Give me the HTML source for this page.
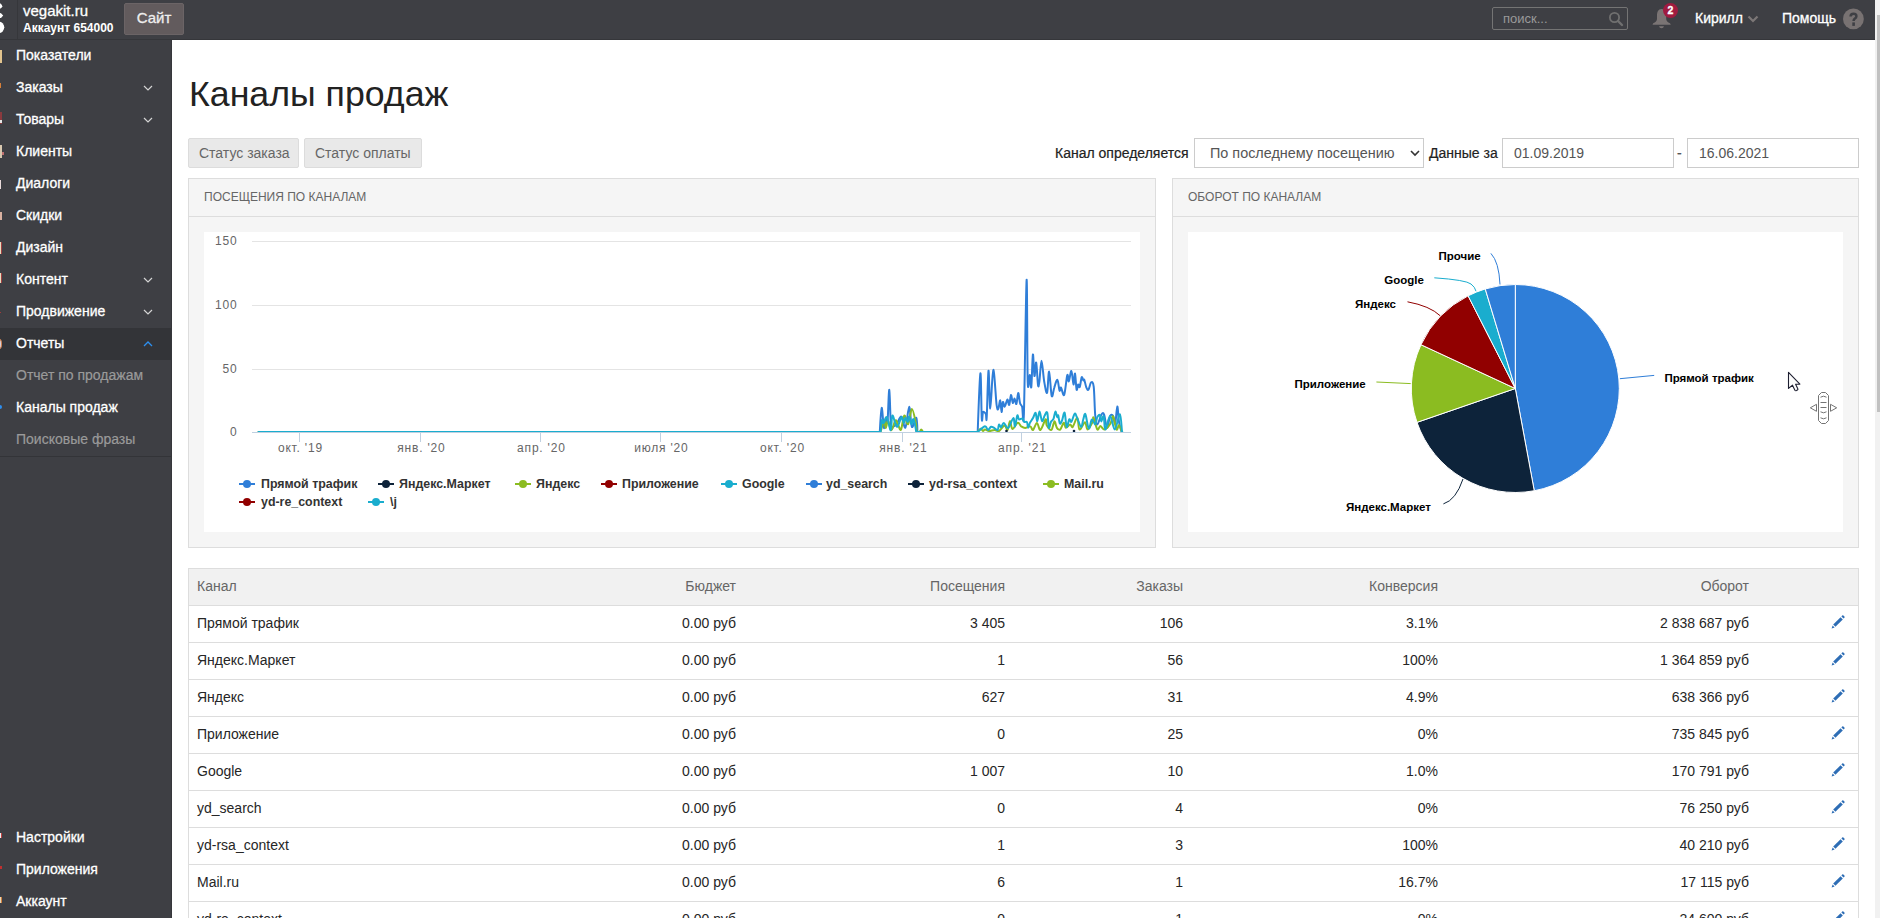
<!DOCTYPE html>
<html><head><meta charset="utf-8">
<style>
*{box-sizing:border-box;margin:0;padding:0}
html,body{width:1880px;height:918px;overflow:hidden;background:#fff;font-family:"Liberation Sans",sans-serif;color:#333}
.abs{position:absolute}
#top{position:absolute;left:0;top:0;width:1875px;height:40px;background:#3e3f44;border-bottom:1px solid #35363a}
#sb{position:absolute;left:0;top:40px;width:172px;height:878px;background:#3e3f44}
#scroll{position:absolute;left:1875px;top:0;width:5px;height:918px;background:#f1f1f1}
#thumb{position:absolute;left:1877px;top:15px;width:3px;height:397px;background:#c1c1c1}
.mi{position:absolute;left:0;width:172px;height:32px;line-height:30px;padding-left:16px;font-size:14px;color:#fff;white-space:nowrap;-webkit-text-stroke:0.3px #fff}
.mi.sub{color:#9a9a9a;-webkit-text-stroke:0.2px #9a9a9a}
.mi.act{background:#333438}
.chev{position:absolute;left:143px;top:12px;width:10px;height:8px}
.t{position:absolute;white-space:nowrap}
</style></head><body>
<div id="top">
  <div class="abs" style="left:17px;top:0;width:1px;height:39px;background:#36373b"></div>
  <div class="t" style="left:23px;top:1px;font-size:15px;color:#fff;line-height:20px;-webkit-text-stroke:0.3px #fff">vegakit.ru</div>
  <div class="t" style="left:23px;top:20px;font-size:12px;font-weight:bold;color:#fff;line-height:16px">Аккаунт 654000</div>
  <div class="abs" style="left:124px;top:3px;width:60px;height:32px;background:#625b5d;border:1px solid #6b6466;border-radius:2px;color:#eee;font-size:15px;line-height:28px;text-align:center;-webkit-text-stroke:0.3px #eee">Сайт</div>

  <div class="abs" style="left:1492px;top:7px;width:136px;height:23px;border:1px solid #747474;border-radius:2px"></div>
  <div class="t" style="left:1503px;top:8px;font-size:13px;line-height:21px;color:#9a9a9a">поиск...</div>
  <svg class="abs" style="left:1608px;top:11px" width="16" height="16" viewBox="0 0 16 16"><circle cx="6.5" cy="6.5" r="4.6" fill="none" stroke="#707070" stroke-width="1.8"/><path d="M10 10 L14 14" stroke="#707070" stroke-width="2.4" stroke-linecap="round"/></svg>
  <svg class="abs" style="left:1651px;top:8px" width="22" height="22" viewBox="0 0 22 22"><path d="M10.5 1 C7.2 1 6 4 6 8 L6 11 C6 13 4.5 14.3 2.2 15.3 L1.5 16.8 L19.8 16.8 L19 15.3 C16.7 14.3 15.2 13 15.2 11 L15.2 8 C15.2 4 14 1 10.5 1 Z" fill="#7a7474"/><path d="M8 18.2 L13 18.2 Q12.5 20.3 10.5 20.3 Q8.5 20.3 8 18.2 Z" fill="#7a7474"/></svg>
  <div class="abs" style="left:1663px;top:3px;width:15px;height:15px;border-radius:50%;background:#a01b40;color:#fff;font-size:10.5px;font-weight:bold;line-height:15px;text-align:center;-webkit-text-stroke:0.3px #fff">2</div>
  <div class="t" style="left:1695px;top:8px;font-size:14px;line-height:20px;color:#fff;-webkit-text-stroke:0.3px #fff">Кирилл</div>
  <svg class="abs" style="left:1747px;top:14px" width="12" height="10" viewBox="0 0 12 10"><path d="M1.5 2.5 L6 7 L10.5 2.5" fill="none" stroke="#7c7777" stroke-width="2.2"/></svg>
  <div class="t" style="left:1782px;top:8px;font-size:14px;line-height:20px;color:#fff;-webkit-text-stroke:0.3px #fff">Помощь</div>
  <svg class="abs" style="left:1843px;top:8px" width="22" height="22" viewBox="0 0 22 22"><circle cx="10.4" cy="10.9" r="10.4" fill="#787272"/><path d="M7.6 8.6 Q7.6 5.8 10.5 5.8 Q13.4 5.8 13.4 8.2 Q13.4 9.7 11.8 10.6 Q10.6 11.3 10.6 13" fill="none" stroke="#3e3f44" stroke-width="2.5"/><rect x="9.3" y="14.4" width="2.6" height="3.5" fill="#3e3f44"/></svg>
  <svg class="abs" style="left:0;top:0" width="17" height="39" viewBox="0 0 17 39"><path d="M0 3.5 L0.6 3.5 Q2.3 5 2.3 6.2 Q2.1 7.6 0.6 8.4 L0 8.4 Z" fill="#fff"/><path d="M0 13 L1 13.2 L3.2 15.6 L1 17.9 L0 18 Z" fill="#fff"/><circle cx="-1.5" cy="27.3" r="5.8" fill="#fff"/></svg>
</div>
<div id="sb">
  <div class="mi" style="top:0px">Показатели</div>
  <div class="mi" style="top:32px">Заказы<svg class="chev" viewBox="0 0 10 8"><path d="M1 2 L5 6 L9 2" fill="none" stroke="#d4d4d4" stroke-width="1.2"/></svg></div>
  <div class="mi" style="top:64px">Товары<svg class="chev" viewBox="0 0 10 8"><path d="M1 2 L5 6 L9 2" fill="none" stroke="#d4d4d4" stroke-width="1.2"/></svg></div>
  <div class="mi" style="top:96px">Клиенты</div>
  <div class="mi" style="top:128px">Диалоги</div>
  <div class="mi" style="top:160px">Скидки</div>
  <div class="mi" style="top:192px">Дизайн</div>
  <div class="mi" style="top:224px">Контент<svg class="chev" viewBox="0 0 10 8"><path d="M1 2 L5 6 L9 2" fill="none" stroke="#d4d4d4" stroke-width="1.2"/></svg></div>
  <div class="mi" style="top:256px">Продвижение<svg class="chev" viewBox="0 0 10 8"><path d="M1 2 L5 6 L9 2" fill="none" stroke="#d4d4d4" stroke-width="1.2"/></svg></div>
  <div class="mi act" style="top:288px">Отчеты<svg class="chev" viewBox="0 0 10 8"><path d="M1 6 L5 2 L9 6" fill="none" stroke="#2d8ff0" stroke-width="1.3"/></svg></div>
  <div class="mi sub" style="top:320px">Отчет по продажам</div>
  <div class="mi" style="top:352px">Каналы продаж</div>
  <div class="mi sub" style="top:384px">Поисковые фразы</div>
  <div class="abs" style="left:0;top:416px;width:172px;height:1px;background:#333438"></div>
  <div class="abs" style="left:171px;top:0;width:1px;height:878px;background:#36373b"></div>
  <div class="mi" style="top:782px">Настройки</div>
  <div class="mi" style="top:814px">Приложения</div>
  <div class="mi" style="top:846px">Аккаунт</div>

  <div class="abs" style="left:0;top:10px;width:2px;height:13px;background:#e2c48e"></div>
  <div class="abs" style="left:0;top:43px;width:1px;height:5px;background:#d6803a"></div>
  <div class="abs" style="left:0;top:72px;width:2px;height:12px;background:#8a3a3e"></div>
  <div class="abs" style="left:0;top:80px;width:2px;height:3px;background:#e6e6e6"></div>
  <div class="abs" style="left:0;top:105px;width:2px;height:13px;background:#d8c8b0"></div>
  <div class="abs" style="left:2px;top:112px;width:2px;height:3px;background:#c07070"></div>
  <div class="abs" style="left:0;top:140px;width:1px;height:9px;background:#e8dada"></div>
  <div class="abs" style="left:0;top:172px;width:2px;height:8px;background:#d8b0a0"></div>
  <div class="abs" style="left:0;top:202px;width:2px;height:12px;background:#e8dcc0;border-right:1px solid #a04040"></div>
  <div class="abs" style="left:0;top:233px;width:2px;height:10px;background:#e8dcc0;border-right:1px solid #a04040"></div>
  <div class="abs" style="left:0;top:272px;width:1px;height:1px;background:#a03a3a"></div>
  <div class="abs" style="left:-3px;top:299px;width:5px;height:10px;border-radius:50%;background:#dcd8e4;border:1px solid #d08050"></div>
  <div class="abs" style="left:-2px;top:365px;width:4px;height:4px;border-radius:50%;background:#2d8ff0"></div>
  <div class="abs" style="left:0;top:793px;width:2px;height:5px;background:#eee;border-right:1px solid #c04040"></div>
  <div class="abs" style="left:0;top:826px;width:2px;height:3px;background:#c03030"></div>
  <div class="abs" style="left:0;top:857px;width:2px;height:6px;background:#e8d8b8;border-right:1px solid #d08040"></div>
</div>
<div id="scroll"></div><div id="thumb"></div>
<style>
.btn{position:absolute;top:138px;height:30px;line-height:28px;background:#e9e9e9;border:1px solid #dcdcdc;border-radius:2px;color:#666;font-size:14px;padding:0 10px;white-space:nowrap}
.lbl{position:absolute;top:138px;line-height:30px;font-size:14px;color:#222;white-space:nowrap;-webkit-text-stroke:0.2px #222}
.inp{position:absolute;top:138px;height:30px;line-height:28px;border:1px solid #ccc;background:#fff;font-size:14px;color:#555;padding-left:11px;white-space:nowrap}
.panel{position:absolute;top:178px;height:370px;background:#f5f5f5;border:1px solid #ddd}
.ph{position:absolute;left:0;top:0;right:0;height:38px;border-bottom:1px solid #ddd;font-size:12px;color:#666;line-height:37px;padding-left:15px}
.pw{position:absolute;left:15px;top:53px;height:300px;background:#fff}
.tbl{position:absolute;left:188px;top:568px;width:1671px;height:360px;border:1px solid #ddd;border-bottom:none}
.tr{position:absolute;left:0;width:1669px;height:37px;border-bottom:1px solid #ddd;font-size:14px;line-height:34px;color:#262626}
.th{background:#f1f1f1;color:#666}
.c{position:absolute;top:0;white-space:nowrap}
.r{text-align:right}
.pen{position:absolute;left:1642px;top:9px;width:14px;height:14px}
.ax{font-family:"Liberation Sans",sans-serif;font-size:12px;fill:#666;letter-spacing:0.8px}
.pl{font-family:"Liberation Sans",sans-serif;font-size:11.5px;font-weight:bold;fill:#000}
.lg{font-family:"Liberation Sans",sans-serif;font-size:12.4px;font-weight:bold;fill:#333}
</style>
<div class="t" style="left:189px;top:76px;font-size:35.7px;line-height:36px;color:#222">Каналы продаж</div>
<div class="btn" style="left:188px;width:111px">Статус заказа</div>
<div class="btn" style="left:304px;width:118px">Статус оплаты</div>
<div class="lbl" style="left:1055px">Канал определяется</div>
<div class="inp" style="left:1194px;width:230px;font-size:14.4px;padding-left:15px">По последнему посещению<svg class="abs" style="left:215px;top:10px" width="10" height="8" viewBox="0 0 10 8"><path d="M1 2 L5 6 L9 2" fill="none" stroke="#333" stroke-width="1.6"/></svg></div>
<div class="lbl" style="left:1429px">Данные за</div>
<div class="inp" style="left:1502px;width:172px">01.09.2019</div>
<div class="lbl" style="left:1677px;color:#555">-</div>
<div class="inp" style="left:1687px;width:172px">16.06.2021</div>
<div class="panel" style="left:188px;width:968px"><div class="ph">ПОСЕЩЕНИЯ ПО КАНАЛАМ</div><div class="pw" style="width:936px"></div></div>
<div class="panel" style="left:1172px;width:687px"><div class="ph">ОБОРОТ ПО КАНАЛАМ</div><div class="pw" style="width:655px"></div></div>
<div class="tbl">
<div class="tr th" style="top:0px"><div class="c" style="left:8px">Канал</div><div class="c r" style="right:1122px">Бюджет</div><div class="c r" style="right:853px">Посещения</div><div class="c r" style="right:675px">Заказы</div><div class="c r" style="right:420px">Конверсия</div><div class="c r" style="right:109px">Оборот</div></div>
<div class="tr " style="top:37px"><div class="c" style="left:8px">Прямой трафик</div><div class="c r" style="right:1122px">0.00 руб</div><div class="c r" style="right:853px">3 405</div><div class="c r" style="right:675px">106</div><div class="c r" style="right:420px">3.1%</div><div class="c r" style="right:109px">2 838 687 руб</div><svg class="pen" viewBox="0 0 14 14"><path d="M2.2 9.6 L9.6 2.2 L11.8 4.4 L4.4 11.8 Z" fill="#2d6db5"/><path d="M10.4 1.4 L11.2 0.6 Q11.8 0 12.4 0.6 L13.4 1.6 Q14 2.2 13.4 2.8 L12.6 3.6 Z" fill="#2d6db5"/><path d="M1.6 10.4 L3.6 12.4 L0.6 13.4 Z" fill="#2d6db5"/></svg></div>
<div class="tr " style="top:74px"><div class="c" style="left:8px">Яндекс.Маркет</div><div class="c r" style="right:1122px">0.00 руб</div><div class="c r" style="right:853px">1</div><div class="c r" style="right:675px">56</div><div class="c r" style="right:420px">100%</div><div class="c r" style="right:109px">1 364 859 руб</div><svg class="pen" viewBox="0 0 14 14"><path d="M2.2 9.6 L9.6 2.2 L11.8 4.4 L4.4 11.8 Z" fill="#2d6db5"/><path d="M10.4 1.4 L11.2 0.6 Q11.8 0 12.4 0.6 L13.4 1.6 Q14 2.2 13.4 2.8 L12.6 3.6 Z" fill="#2d6db5"/><path d="M1.6 10.4 L3.6 12.4 L0.6 13.4 Z" fill="#2d6db5"/></svg></div>
<div class="tr " style="top:111px"><div class="c" style="left:8px">Яндекс</div><div class="c r" style="right:1122px">0.00 руб</div><div class="c r" style="right:853px">627</div><div class="c r" style="right:675px">31</div><div class="c r" style="right:420px">4.9%</div><div class="c r" style="right:109px">638 366 руб</div><svg class="pen" viewBox="0 0 14 14"><path d="M2.2 9.6 L9.6 2.2 L11.8 4.4 L4.4 11.8 Z" fill="#2d6db5"/><path d="M10.4 1.4 L11.2 0.6 Q11.8 0 12.4 0.6 L13.4 1.6 Q14 2.2 13.4 2.8 L12.6 3.6 Z" fill="#2d6db5"/><path d="M1.6 10.4 L3.6 12.4 L0.6 13.4 Z" fill="#2d6db5"/></svg></div>
<div class="tr " style="top:148px"><div class="c" style="left:8px">Приложение</div><div class="c r" style="right:1122px">0.00 руб</div><div class="c r" style="right:853px">0</div><div class="c r" style="right:675px">25</div><div class="c r" style="right:420px">0%</div><div class="c r" style="right:109px">735 845 руб</div><svg class="pen" viewBox="0 0 14 14"><path d="M2.2 9.6 L9.6 2.2 L11.8 4.4 L4.4 11.8 Z" fill="#2d6db5"/><path d="M10.4 1.4 L11.2 0.6 Q11.8 0 12.4 0.6 L13.4 1.6 Q14 2.2 13.4 2.8 L12.6 3.6 Z" fill="#2d6db5"/><path d="M1.6 10.4 L3.6 12.4 L0.6 13.4 Z" fill="#2d6db5"/></svg></div>
<div class="tr " style="top:185px"><div class="c" style="left:8px">Google</div><div class="c r" style="right:1122px">0.00 руб</div><div class="c r" style="right:853px">1 007</div><div class="c r" style="right:675px">10</div><div class="c r" style="right:420px">1.0%</div><div class="c r" style="right:109px">170 791 руб</div><svg class="pen" viewBox="0 0 14 14"><path d="M2.2 9.6 L9.6 2.2 L11.8 4.4 L4.4 11.8 Z" fill="#2d6db5"/><path d="M10.4 1.4 L11.2 0.6 Q11.8 0 12.4 0.6 L13.4 1.6 Q14 2.2 13.4 2.8 L12.6 3.6 Z" fill="#2d6db5"/><path d="M1.6 10.4 L3.6 12.4 L0.6 13.4 Z" fill="#2d6db5"/></svg></div>
<div class="tr " style="top:222px"><div class="c" style="left:8px">yd_search</div><div class="c r" style="right:1122px">0.00 руб</div><div class="c r" style="right:853px">0</div><div class="c r" style="right:675px">4</div><div class="c r" style="right:420px">0%</div><div class="c r" style="right:109px">76 250 руб</div><svg class="pen" viewBox="0 0 14 14"><path d="M2.2 9.6 L9.6 2.2 L11.8 4.4 L4.4 11.8 Z" fill="#2d6db5"/><path d="M10.4 1.4 L11.2 0.6 Q11.8 0 12.4 0.6 L13.4 1.6 Q14 2.2 13.4 2.8 L12.6 3.6 Z" fill="#2d6db5"/><path d="M1.6 10.4 L3.6 12.4 L0.6 13.4 Z" fill="#2d6db5"/></svg></div>
<div class="tr " style="top:259px"><div class="c" style="left:8px">yd-rsa_context</div><div class="c r" style="right:1122px">0.00 руб</div><div class="c r" style="right:853px">1</div><div class="c r" style="right:675px">3</div><div class="c r" style="right:420px">100%</div><div class="c r" style="right:109px">40 210 руб</div><svg class="pen" viewBox="0 0 14 14"><path d="M2.2 9.6 L9.6 2.2 L11.8 4.4 L4.4 11.8 Z" fill="#2d6db5"/><path d="M10.4 1.4 L11.2 0.6 Q11.8 0 12.4 0.6 L13.4 1.6 Q14 2.2 13.4 2.8 L12.6 3.6 Z" fill="#2d6db5"/><path d="M1.6 10.4 L3.6 12.4 L0.6 13.4 Z" fill="#2d6db5"/></svg></div>
<div class="tr " style="top:296px"><div class="c" style="left:8px">Mail.ru</div><div class="c r" style="right:1122px">0.00 руб</div><div class="c r" style="right:853px">6</div><div class="c r" style="right:675px">1</div><div class="c r" style="right:420px">16.7%</div><div class="c r" style="right:109px">17 115 руб</div><svg class="pen" viewBox="0 0 14 14"><path d="M2.2 9.6 L9.6 2.2 L11.8 4.4 L4.4 11.8 Z" fill="#2d6db5"/><path d="M10.4 1.4 L11.2 0.6 Q11.8 0 12.4 0.6 L13.4 1.6 Q14 2.2 13.4 2.8 L12.6 3.6 Z" fill="#2d6db5"/><path d="M1.6 10.4 L3.6 12.4 L0.6 13.4 Z" fill="#2d6db5"/></svg></div>
<div class="tr " style="top:333px"><div class="c" style="left:8px">yd-re_context</div><div class="c r" style="right:1122px">0.00 руб</div><div class="c r" style="right:853px">0</div><div class="c r" style="right:675px">1</div><div class="c r" style="right:420px">0%</div><div class="c r" style="right:109px">24 600 руб</div><svg class="pen" viewBox="0 0 14 14"><path d="M2.2 9.6 L9.6 2.2 L11.8 4.4 L4.4 11.8 Z" fill="#2d6db5"/><path d="M10.4 1.4 L11.2 0.6 Q11.8 0 12.4 0.6 L13.4 1.6 Q14 2.2 13.4 2.8 L12.6 3.6 Z" fill="#2d6db5"/><path d="M1.6 10.4 L3.6 12.4 L0.6 13.4 Z" fill="#2d6db5"/></svg></div>
</div>
<svg class="abs" style="left:0;top:0" width="1880" height="918" viewBox="0 0 1880 918">
<rect x="252" y="241" width="879" height="1" fill="#e4e4e4"/>
<text class="ax" x="237.5" y="244.5" text-anchor="end">150</text>
<rect x="252" y="305" width="879" height="1" fill="#e4e4e4"/>
<text class="ax" x="237.5" y="308.5" text-anchor="end">100</text>
<rect x="252" y="369" width="879" height="1" fill="#e4e4e4"/>
<text class="ax" x="237.5" y="372.5" text-anchor="end">50</text>
<text class="ax" x="237.5" y="435.5" text-anchor="end">0</text>
<rect x="299" y="432" width="1" height="10" fill="#c0d0e0"/>
<text class="ax" x="300.4" y="452" text-anchor="middle">окт. '19</text>
<rect x="420" y="432" width="1" height="10" fill="#c0d0e0"/>
<text class="ax" x="421.4" y="452" text-anchor="middle">янв. '20</text>
<rect x="540" y="432" width="1" height="10" fill="#c0d0e0"/>
<text class="ax" x="541.4" y="452" text-anchor="middle">апр. '20</text>
<rect x="660" y="432" width="1" height="10" fill="#c0d0e0"/>
<text class="ax" x="661.4" y="452" text-anchor="middle">июля '20</text>
<rect x="781" y="432" width="1" height="10" fill="#c0d0e0"/>
<text class="ax" x="782.4" y="452" text-anchor="middle">окт. '20</text>
<rect x="902" y="432" width="1" height="10" fill="#c0d0e0"/>
<text class="ax" x="903.4" y="452" text-anchor="middle">янв. '21</text>
<rect x="1021" y="432" width="1" height="10" fill="#c0d0e0"/>
<text class="ax" x="1022.4" y="452" text-anchor="middle">апр. '21</text>
<path d="M258.6 432.0 L879.8 432.0 C879.8 432.0 881.0 408.6 881.7 407.9 C882.4 407.2 883.2 426.2 883.9 428.0 C884.6 429.8 885.5 420.0 886.1 418.8 C886.7 417.6 887.1 425.8 887.6 421.0 C888.1 416.2 888.7 388.8 889.3 389.9 C889.9 391.0 890.3 421.4 891.0 427.5 C891.7 432.0 892.4 426.9 893.4 426.4 C894.4 425.8 895.4 425.8 896.7 424.2 C898.0 422.6 899.8 416.1 901.3 416.6 C902.8 417.2 904.1 429.1 905.4 427.5 C906.7 425.9 908.1 406.9 909.2 406.8 C910.3 406.7 910.7 425.1 911.9 426.9 C913.1 428.7 915.4 416.8 916.3 417.7 C917.2 418.6 917.4 432.0 917.4 432.0 L977.7 432.0 C977.7 432.0 979.7 375.6 980.4 373.4 C981.1 371.2 981.3 412.6 981.8 419.0 C982.2 425.4 982.4 412.8 983.1 412.0 C983.8 411.2 985.2 413.1 985.8 414.0 C986.4 414.9 986.2 424.7 986.7 417.5 C987.2 410.3 987.9 372.2 988.5 370.7 C989.1 369.2 989.5 408.6 990.3 408.5 C991.1 408.4 992.2 370.4 993.3 369.8 C994.3 369.2 995.8 398.6 996.6 405.0 C997.5 411.4 997.8 409.3 998.4 408.5 C999.0 407.7 999.7 399.8 1000.2 400.4 C1000.7 401.0 1001.2 411.7 1001.6 412.0 C1002.0 412.3 1002.4 402.9 1002.9 402.0 C1003.4 401.1 1004.0 407.1 1004.7 406.7 C1005.5 406.3 1006.6 399.8 1007.4 399.5 C1008.1 399.2 1008.6 405.8 1009.2 405.0 C1009.8 404.2 1010.4 395.3 1011.0 395.0 C1011.6 394.7 1012.2 402.4 1012.8 403.0 C1013.4 403.6 1014.0 398.4 1014.6 398.6 C1015.2 398.8 1015.8 404.9 1016.4 404.0 C1017.0 403.1 1017.6 393.2 1018.2 393.0 C1018.8 392.8 1019.4 400.7 1020.0 403.0 C1020.6 405.3 1021.5 404.9 1022.1 406.7 C1022.8 408.5 1023.1 432.0 1023.9 414.0 C1024.6 392.9 1026.0 285.4 1026.6 280.0 C1027.2 274.6 1027.2 365.7 1027.7 381.5 C1028.2 397.3 1029.3 374.1 1029.9 375.0 C1030.5 375.9 1030.8 390.4 1031.3 387.0 C1031.8 383.6 1032.4 356.3 1032.9 354.5 C1033.4 352.7 1033.9 374.6 1034.4 376.0 C1035.0 377.4 1035.6 361.1 1036.2 362.6 C1036.8 364.1 1037.5 381.9 1038.0 385.0 C1038.5 388.1 1038.8 385.5 1039.4 381.5 C1040.0 377.5 1040.7 360.8 1041.5 360.8 C1042.3 360.8 1043.3 376.2 1044.2 381.5 C1045.1 386.8 1046.3 394.4 1047.1 392.8 C1047.9 391.2 1048.3 371.1 1049.1 371.6 C1049.9 372.1 1050.8 393.2 1051.7 395.9 C1052.6 398.6 1053.3 390.3 1054.3 387.6 C1055.2 384.9 1056.5 379.4 1057.4 379.9 C1058.3 380.4 1058.9 389.4 1059.5 390.7 C1060.1 392.0 1060.2 386.9 1061.0 387.6 C1061.8 388.3 1063.2 397.0 1064.2 394.9 C1065.2 392.8 1066.5 377.4 1067.3 375.2 C1068.1 372.9 1068.1 382.1 1068.8 381.4 C1069.5 380.7 1070.6 370.5 1071.4 371.0 C1072.2 371.5 1072.9 384.1 1073.5 384.5 C1074.1 384.9 1074.5 372.7 1075.0 373.6 C1075.5 374.5 1076.1 387.9 1076.6 389.7 C1077.1 391.5 1077.6 384.9 1078.1 384.5 C1078.6 384.1 1079.1 388.3 1079.7 387.1 C1080.3 385.9 1081.1 378.4 1081.7 377.3 C1082.3 376.2 1082.9 380.0 1083.3 380.4 C1083.7 380.8 1083.8 378.7 1084.3 379.9 C1084.8 381.1 1085.7 386.0 1086.4 387.6 C1087.1 389.2 1087.7 390.6 1088.5 389.7 C1089.3 388.8 1090.2 382.9 1091.1 382.4 C1092.0 381.9 1093.0 381.2 1093.7 386.6 C1094.4 392.0 1094.6 408.7 1095.2 415.0 C1095.8 421.3 1096.2 424.5 1097.3 424.4 C1098.4 424.3 1100.5 415.8 1101.6 414.2 C1102.7 412.6 1103.2 412.3 1104.1 414.6 C1105.0 416.9 1106.1 427.6 1107.1 427.8 C1108.1 428.0 1109.1 417.9 1110.1 415.9 C1111.1 413.9 1112.2 414.6 1113.1 415.9 C1113.9 417.2 1114.5 425.1 1115.2 423.5 C1115.9 421.9 1116.7 406.8 1117.3 406.5 C1117.9 406.2 1118.3 417.6 1119.0 421.8 C1119.7 426.1 1121.1 430.3 1121.6 432.0 C1122.1 432.0 1122.1 432.0 1122.1 432.0" stroke="#2f7ed8" stroke-width="2" fill="none" stroke-linejoin="round" stroke-linecap="round"/>
<path d="M258.6 432.0 L880.5 432.0 C880.5 432.0 883.3 422.2 884.2 421.5 C885.1 420.8 885.2 428.1 885.8 428.0 C886.4 427.9 887.1 420.6 888.0 421.0 C888.9 421.4 890.0 430.3 891.3 430.2 C892.6 430.1 894.4 421.2 895.6 420.4 C896.8 419.6 897.4 423.8 898.3 425.3 C899.2 426.9 900.0 431.3 901.0 429.7 C902.0 428.1 903.1 416.4 904.3 415.5 C905.5 414.6 906.8 425.3 908.1 424.2 C909.4 423.1 910.6 409.2 911.9 409.0 C913.2 408.8 915.0 419.3 915.8 423.1 C916.6 426.9 916.2 430.5 916.8 432.0 C917.4 432.0 918.8 432.0 919.5 432.0 C920.2 431.6 920.6 429.5 921.2 429.5 C921.8 429.5 923.0 432.0 923.0 432.0 L977.6 432.0 C977.6 432.0 979.8 429.0 980.7 428.8 C981.6 428.6 982.3 430.9 983.0 431.0 C983.7 431.1 984.0 429.5 985.0 429.5 C986.0 429.5 987.4 430.9 989.0 431.0 C990.6 431.1 992.9 430.0 994.6 430.0 C996.3 430.0 997.3 431.8 999.0 431.0 C1000.7 430.2 1003.2 425.7 1004.6 425.5 C1006.0 425.3 1006.6 430.7 1007.5 430.0 C1008.4 429.3 1009.1 421.3 1009.9 421.1 C1010.7 420.9 1011.2 428.7 1012.5 429.0 C1013.8 429.3 1016.2 423.3 1017.7 422.9 C1019.2 422.5 1020.0 425.5 1021.2 426.4 C1022.4 427.2 1023.6 428.0 1025.1 428.0 C1026.6 428.0 1029.0 426.1 1030.3 426.4 C1031.6 426.7 1031.9 430.6 1033.0 430.0 C1034.1 429.4 1035.7 422.9 1036.9 422.9 C1038.1 422.9 1039.0 430.6 1040.4 430.0 C1041.9 429.4 1044.5 420.2 1045.6 419.4 C1046.6 418.6 1045.7 423.4 1046.7 425.2 C1047.7 426.9 1050.1 430.5 1051.4 429.9 C1052.7 429.3 1053.5 421.8 1054.4 421.4 C1055.3 421.0 1055.9 426.4 1056.9 427.8 C1057.9 429.2 1059.2 430.4 1060.3 429.5 C1061.4 428.6 1062.8 423.0 1063.7 422.7 C1064.6 422.4 1064.8 427.5 1065.9 427.8 C1067.0 428.1 1069.0 424.5 1070.1 424.4 C1071.2 424.2 1071.5 428.0 1072.7 426.9 C1073.9 425.8 1076.2 417.2 1077.3 417.6 C1078.4 418.0 1078.2 428.7 1079.5 429.5 C1080.8 430.3 1083.7 422.3 1085.0 422.3 C1086.3 422.3 1086.3 429.6 1087.6 429.5 C1088.9 429.4 1091.7 423.8 1092.7 421.8 C1093.7 419.8 1092.7 416.3 1093.5 417.6 C1094.3 418.9 1096.2 428.1 1097.3 429.5 C1098.4 430.9 1099.1 426.1 1100.3 426.1 C1101.5 426.1 1102.9 429.9 1104.6 429.5 C1106.3 429.1 1109.1 425.7 1110.5 423.5 C1111.9 421.3 1112.1 415.3 1113.1 416.3 C1114.1 417.3 1115.5 428.0 1116.5 429.5 C1117.5 431.0 1118.1 424.8 1119.0 425.2 C1119.9 425.6 1121.5 430.9 1122.0 432.0 C1122.5 432.0 1122.1 432.0 1122.1 432.0" stroke="#8bbc21" stroke-width="2" fill="none" stroke-linejoin="round" stroke-linecap="round"/>
<path d="M258.6 432.0 L880.6 432.0 C880.6 432.0 881.5 421.4 882.0 419.9 C882.5 418.4 882.8 423.6 883.6 423.1 C884.4 422.6 885.7 415.9 886.9 417.1 C888.1 418.3 889.8 430.5 890.7 430.2 C891.6 429.9 891.5 416.5 892.3 415.5 C893.1 414.5 894.7 422.4 895.6 424.2 C896.5 426.0 896.8 427.6 897.8 426.4 C898.8 425.2 900.6 417.7 901.6 417.1 C902.6 416.6 903.2 423.0 903.8 423.1 C904.4 423.2 904.8 417.9 905.4 417.7 C906.0 417.5 907.0 422.2 907.6 422.0 C908.2 421.8 908.6 416.2 909.2 416.6 C909.8 417.0 910.7 423.8 911.4 424.2 C912.1 424.6 912.8 418.0 913.6 419.3 C914.4 420.6 916.3 432.0 916.3 432.0 L977.6 432.0 C977.6 432.0 982.3 427.7 983.7 426.8 C985.1 425.9 985.2 426.3 985.9 426.8 C986.6 427.3 987.2 429.9 988.1 429.9 C989.0 429.9 990.1 427.1 991.1 426.8 C992.1 426.5 993.1 427.5 994.2 428.0 C995.3 428.5 996.9 430.5 997.7 429.9 C998.5 429.3 998.4 425.1 999.0 424.6 C999.6 424.2 1000.3 427.5 1001.1 427.2 C1001.9 426.9 1002.6 422.8 1003.8 422.9 C1005.0 423.0 1006.5 428.8 1008.1 428.0 C1009.7 427.2 1012.1 418.4 1013.3 418.1 C1014.4 417.8 1014.3 426.8 1015.0 426.4 C1015.7 426.0 1016.6 416.7 1017.3 415.5 C1018.0 414.3 1018.1 418.9 1019.0 419.4 C1019.9 419.9 1021.6 418.1 1022.5 418.5 C1023.4 418.9 1023.5 421.4 1024.2 422.0 C1024.9 422.6 1026.2 421.1 1026.9 422.0 C1027.6 422.9 1027.7 427.6 1028.2 427.7 C1028.7 427.8 1029.1 424.5 1029.9 422.9 C1030.7 421.3 1032.0 419.8 1033.0 418.1 C1034.0 416.4 1034.9 412.4 1035.6 412.9 C1036.3 413.4 1036.6 421.3 1037.3 421.1 C1038.0 420.9 1038.7 411.6 1039.5 411.6 C1040.3 411.6 1041.2 420.5 1042.1 421.1 C1043.0 421.8 1043.8 416.9 1044.7 415.5 C1045.6 414.1 1046.6 410.6 1047.3 412.7 C1048.0 414.8 1048.2 426.3 1048.8 427.8 C1049.4 429.3 1050.2 423.3 1051.0 421.8 C1051.8 420.3 1052.8 420.6 1053.5 418.9 C1054.2 417.2 1054.8 411.9 1055.4 411.6 C1056.0 411.3 1056.8 416.5 1057.3 417.1 C1057.8 417.7 1057.8 414.3 1058.2 415.4 C1058.6 416.5 1059.3 422.6 1059.9 423.5 C1060.5 424.4 1061.2 422.4 1062.0 420.6 C1062.8 418.8 1063.8 411.6 1064.6 412.7 C1065.4 413.8 1065.9 425.8 1066.7 426.9 C1067.5 428.0 1068.5 420.1 1069.3 419.3 C1070.1 418.5 1070.5 422.7 1071.4 421.8 C1072.3 420.9 1073.8 414.3 1074.8 413.7 C1075.8 413.1 1076.2 416.2 1077.3 418.4 C1078.4 420.6 1080.2 426.8 1081.2 426.9 C1082.2 427.0 1082.6 421.4 1083.3 419.3 C1084.0 417.2 1084.5 412.6 1085.4 414.2 C1086.3 415.8 1087.7 427.7 1088.8 428.6 C1089.9 429.5 1090.7 420.4 1091.8 419.7 C1092.9 419.0 1094.3 424.8 1095.2 424.4 C1096.1 424.0 1096.5 418.7 1097.3 417.1 C1098.1 415.5 1099.2 414.3 1099.9 415.0 C1100.6 415.7 1100.6 421.2 1101.2 421.4 C1101.8 421.6 1103.0 414.9 1103.7 416.3 C1104.4 417.7 1104.3 429.6 1105.4 429.5 C1106.5 429.4 1108.5 415.9 1110.1 415.9 C1111.7 415.9 1113.2 429.8 1114.8 429.5 C1116.4 429.2 1118.7 413.8 1119.9 414.2 C1121.1 414.6 1121.6 429.0 1122.0 432.0 C1122.4 432.0 1122.1 432.0 1122.1 432.0" stroke="#1aadce" stroke-width="2" fill="none" stroke-linejoin="round" stroke-linecap="round"/>
<circle cx="1006.5" cy="431" r="1.3" fill="#0d233a"/><circle cx="1074" cy="431" r="1.3" fill="#0d233a"/>
<rect x="252" y="432" width="879" height="1" fill="#c0d0e0"/>
<rect x="239" y="483" width="16" height="2" fill="#2f7ed8"/><circle cx="247" cy="484" r="4" fill="#2f7ed8"/>
<text class="lg" x="261" y="488">Прямой трафик</text>
<rect x="378" y="483" width="16" height="2" fill="#0d233a"/><circle cx="386" cy="484" r="4" fill="#0d233a"/>
<text class="lg" x="399" y="488">Яндекс.Маркет</text>
<rect x="515" y="483" width="16" height="2" fill="#8bbc21"/><circle cx="523" cy="484" r="4" fill="#8bbc21"/>
<text class="lg" x="536" y="488">Яндекс</text>
<rect x="601" y="483" width="16" height="2" fill="#910000"/><circle cx="609" cy="484" r="4" fill="#910000"/>
<text class="lg" x="622" y="488">Приложение</text>
<rect x="721" y="483" width="16" height="2" fill="#1aadce"/><circle cx="729" cy="484" r="4" fill="#1aadce"/>
<text class="lg" x="742" y="488">Google</text>
<rect x="806" y="483" width="16" height="2" fill="#2f7ed8"/><circle cx="814" cy="484" r="4" fill="#2f7ed8"/>
<text class="lg" x="826" y="488">yd_search</text>
<rect x="908" y="483" width="16" height="2" fill="#0d233a"/><circle cx="916" cy="484" r="4" fill="#0d233a"/>
<text class="lg" x="929" y="488">yd-rsa_context</text>
<rect x="1043" y="483" width="16" height="2" fill="#8bbc21"/><circle cx="1051" cy="484" r="4" fill="#8bbc21"/>
<text class="lg" x="1064" y="488">Mail.ru</text>
<rect x="239" y="501" width="16" height="2" fill="#910000"/><circle cx="247" cy="502" r="4" fill="#910000"/>
<text class="lg" x="261" y="506">yd-re_context</text>
<rect x="368" y="501" width="16" height="2" fill="#1aadce"/><circle cx="376" cy="502" r="4" fill="#1aadce"/>
<text class="lg" x="390" y="506">\j</text>
<path d="M1515.3 388.5 L1515.30 284.50 A104 104 0 0 1 1534.25 490.76 Z" fill="#2f7ed8" stroke="#fff" stroke-width="1" stroke-linejoin="round"/>
<path d="M1515.3 388.5 L1534.25 490.76 A104 104 0 0 1 1416.97 422.36 Z" fill="#0d233a" stroke="#fff" stroke-width="1" stroke-linejoin="round"/>
<path d="M1515.3 388.5 L1416.97 422.36 A104 104 0 0 1 1420.97 344.71 Z" fill="#8bbc21" stroke="#fff" stroke-width="1" stroke-linejoin="round"/>
<path d="M1515.3 388.5 L1420.97 344.71 A104 104 0 0 1 1468.08 295.84 Z" fill="#910000" stroke="#fff" stroke-width="1" stroke-linejoin="round"/>
<path d="M1515.3 388.5 L1468.08 295.84 A104 104 0 0 1 1485.24 288.94 Z" fill="#1aadce" stroke="#fff" stroke-width="1" stroke-linejoin="round"/>
<path d="M1515.3 388.5 L1485.24 288.94 A104 104 0 0 1 1515.30 284.50 Z" fill="#2f7ed8" stroke="#fff" stroke-width="1" stroke-linejoin="round"/>
<path d="M1490.9 253.4 Q1499 262 1500 284.5" fill="none" stroke="#2f7ed8" stroke-width="1"/>
<path d="M1434.3 277.8 Q1466 280 1471 284 Q1475 287 1476 291.2" fill="none" stroke="#1aadce" stroke-width="1"/>
<path d="M1407.5 301.8 Q1430 306 1440.1 315.7" fill="none" stroke="#910000" stroke-width="1"/>
<path d="M1376.4 382 L1410.7 383.6" fill="none" stroke="#8bbc21" stroke-width="1"/>
<path d="M1619.9 378.7 L1654.2 375.4" fill="none" stroke="#2f7ed8" stroke-width="1"/>
<path d="M1443.4 503.9 Q1456 500 1463 479" fill="none" stroke="#0d233a" stroke-width="1"/>
<text class="pl" x="1438.5" y="259.9">Прочие</text>
<text class="pl" x="1384.3" y="283.6">Google</text>
<text class="pl" x="1355" y="307.5">Яндекс</text>
<text class="pl" x="1294.5" y="387.5">Приложение</text>
<text class="pl" x="1664.4" y="382">Прямой трафик</text>
<text class="pl" x="1346" y="511">Яндекс.Маркет</text>
</svg>

<svg class="abs" style="left:1786px;top:370px" width="16" height="24" viewBox="0 0 16 24"><path d="M2.5 2.3 L2.5 18.4 L6.5 15.2 L8.9 20.2 Q9.4 21 10.4 20.6 L11.4 20.1 Q12.2 19.6 11.8 18.8 L9.6 14.3 L13.9 14.1 Z" fill="#fcfcfc" stroke="#1d1e30" stroke-width="1.1" stroke-linejoin="round"/></svg>
<svg class="abs" style="left:1808px;top:390px" width="32" height="36" viewBox="0 0 32 36"><path d="M13.5 2.5 L17.5 2.5 L20.5 5.5 L20.5 30.5 L17.5 33.5 L13.5 33.5 L10.5 30.5 L10.5 5.5 Z" fill="#fff" stroke="#747474" stroke-width="1"/><path d="M12.5 7.2 Q15.5 5.2 18.5 7.2 M12.5 12.5 L18.5 12.5 M12.5 17.5 L18.5 17.5 M12.5 21.8 Q15.5 23.8 18.5 21.8 M12.5 27.8 Q15.5 29.8 18.5 27.8" fill="none" stroke="#747474" stroke-width="1"/><path d="M8.5 14.3 L2.3 17.8 L8.5 21.3 Z M22.5 14.3 L28.7 17.8 L22.5 21.3 Z" fill="#fff" stroke="#747474" stroke-width="1" stroke-linejoin="round"/></svg>

</body></html>
